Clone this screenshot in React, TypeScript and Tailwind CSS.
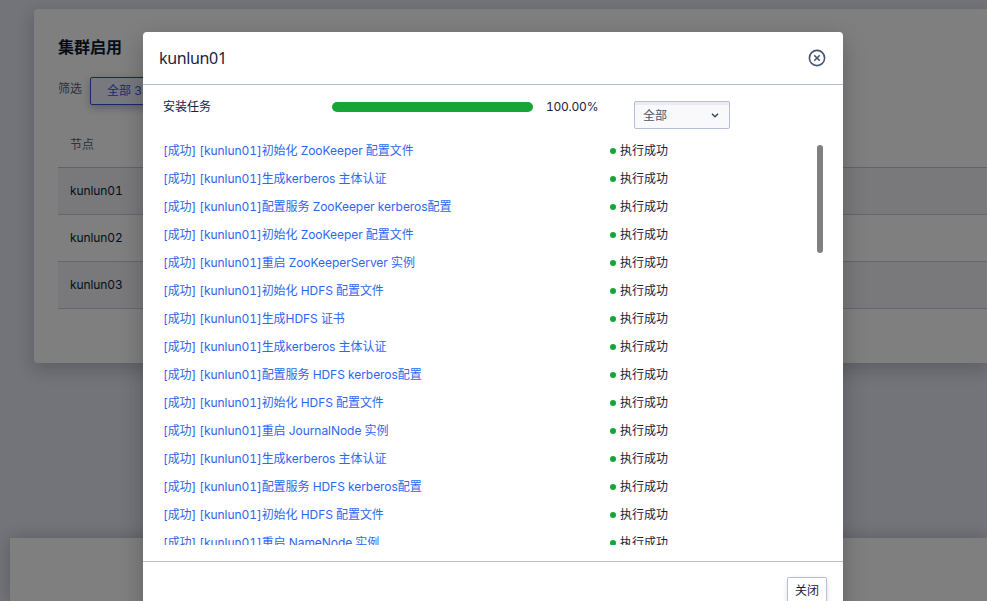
import React from 'react';

const tasks = [
  '初始化 ZooKeeper 配置文件',
  '生成kerberos 主体认证',
  '配置服务 ZooKeeper kerberos配置',
  '初始化 ZooKeeper 配置文件',
  '重启 ZooKeeperServer 实例',
  '初始化 HDFS 配置文件',
  '生成HDFS 证书',
  '生成kerberos 主体认证',
  '配置服务 HDFS kerberos配置',
  '初始化 HDFS 配置文件',
  '重启 JournalNode 实例',
  '生成kerberos 主体认证',
  '配置服务 HDFS kerberos配置',
  '初始化 HDFS 配置文件',
  '重启 NameNode 实例',
];

const nodes = ['kunlun01', 'kunlun02', 'kunlun03'];

function ClusterPage() {
  return (
    <div className="flex h-[601px] flex-col overflow-hidden bg-[#e6e9f2] pt-[9px]">
      <section className="ml-[34px] h-[354px] shrink-0 rounded-l bg-white pl-6 shadow-[0_6px_18px_2px_rgba(25,30,60,0.2)]">
        <h1 className="pt-[26px] text-[16px] leading-6 font-bold text-[#0f1833]">集群启用</h1>
        <div className="mt-[9px] flex h-[37px] items-start">
          <span className="pt-[11px] leading-5 text-[#5b6478]">筛选</span>
          <button className="mt-[9px] ml-2 h-7 w-[72px] rounded-[2px] border border-[#2b50d8] bg-[#f0f3fc] pl-4 text-left leading-[26px] whitespace-nowrap text-[#2f55e6] shadow-[0_3px_8px_rgba(25,40,80,0.3)]">
            全部 3
          </button>
        </div>
        <div className="mt-[15px] h-[48px] border-b border-[#c3c5dc] pl-3 leading-[50px] text-[#5b6478]">节点</div>
        {nodes.map((node) => (
          <div key={node} className="h-[47px] border-b border-[#c9cbe4] pl-3 leading-[46px] tracking-[-0.1px] text-[#0f1833] odd:bg-white even:bg-[#f3f3f8]">
            {node}
          </div>
        ))}
      </section>
      <footer className="mt-[175px] ml-[10px] h-16 shrink-0 bg-white shadow-[0_0_16px_rgba(25,30,60,0.25)]" />
    </div>
  );
}

function InstallDialog() {
  return (
    <div className="flex h-[601px] w-[700px] flex-col rounded-t bg-white shadow-[0_8px_24px_rgba(0,0,0,0.24)]">
      <header className="flex h-[53px] shrink-0 items-center justify-between border-b border-[#b5bfd5] px-4">
        <h2 className="font-['Noto_Sans',sans-serif] text-[16px] leading-6 tracking-[-0.35px] text-[#172240]">kunlun01</h2>
        <svg className="mr-px" width="18" height="18" viewBox="0 0 18 18" fill="none" stroke="#46546f" strokeWidth="1.6">
          <circle cx="9" cy="9" r="7.6" />
          <path d="M6.2 6.2l5.6 5.6M11.8 6.2l-5.6 5.6" />
        </svg>
      </header>
      <div className="flex h-[52px] shrink-0 pl-5">
        <span className="w-[169px] pt-3 leading-5">安装任务</span>
        <div className="mt-[17px] h-[10px] w-[201px] rounded-full bg-[#18a538]" />
        <span className="w-[101px] pt-3 pl-[13px] leading-5 tracking-[-0.25px]">100.00%</span>
        <button className="mt-4 flex h-7 w-24 items-center justify-between rounded-[2px] border border-[#b5bfd5] bg-[#f9f9fb] pr-[10px] pl-2 text-[#46546f] shadow-[inset_0_3px_0_#ebecee]">
          <span className="pt-px">全部</span>
          <svg width="8" height="8" viewBox="0 0 8 8" fill="none" stroke="#34435f" strokeWidth="1.4">
            <path d="M1 2.8l3 3 3-3" />
          </svg>
        </button>
      </div>
      <div className="flex h-[408px] shrink-0 overflow-hidden pl-5">
        <ul className="w-[654px]">
          {tasks.map((task, i) => (
            <li key={i} className="flex h-7 items-center">
              <a className="w-[447px] tracking-[-0.05px] whitespace-nowrap text-[#2d66f0]">[成功] [kunlun01]{task}</a>
              <i className="mr-1 size-[6px] rounded-full bg-[#18a538]" />
              <span>执行成功</span>
            </li>
          ))}
        </ul>
        <div className="mt-2 h-[108px] w-[6px] rounded-full bg-[#808080]" />
      </div>
      <footer className="mt-4 flex h-20 shrink-0 items-start justify-end border-t border-[#b5bfd5] pt-[15px] pr-4">
        <button className="h-7 w-10 rounded-[2px] border border-[#b5bfd5] bg-white leading-[26px] shadow-[0_2px_5px_rgba(25,40,80,0.15)]">关闭</button>
      </footer>
    </div>
  );
}

export default function App() {
  return (
    <div className="relative h-[601px] overflow-hidden font-['Inter','Noto_Sans_CJK_SC',sans-serif] text-[12px] text-[#172240] tabular-nums">
      <ClusterPage />
      <div className="absolute inset-0 overflow-hidden bg-black/50 pt-8 pl-[143px]">
        <InstallDialog />
      </div>
    </div>
  );
}
